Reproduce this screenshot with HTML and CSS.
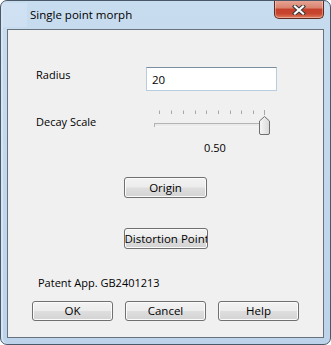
FILE: index.html
```html
<!DOCTYPE html>
<html lang="en">
<head>
    <meta charset="UTF-8">
    <title>Single point morph</title>
    <link rel="stylesheet" href="styles.css">
</head>
<body>
    <div class="window">
        <div class="titlebar">
            <span class="icon-slot"></span>
            <span class="title">Single point morph</span>
            <button class="close-btn" aria-label="Close">
                <svg width="14" height="10" viewBox="0 0 14 10">
                    <path d="M3 1.5 L11 8.5 M11 1.5 L3 8.5" stroke="#3a3a3a" stroke-width="4.2" stroke-linecap="square"/>
                    <path d="M3 1.5 L11 8.5 M11 1.5 L3 8.5" stroke="#ffffff" stroke-width="2.2" stroke-linecap="square"/>
                </svg>
            </button>
        </div>

        <div class="client">
            <div class="row row-radius">
                <label for="radius">Radius</label>
                <input type="text" id="radius" value="20">
            </div>

            <div class="row row-decay">
                <label>Decay Scale</label>
                <!-- trackbar -->
                <svg class="slider" width="124" height="30" viewBox="0 0 124 30">
                    <defs>
                        <linearGradient id="thumbFill" x1="0" y1="0" x2="1" y2="0">
                            <stop offset="0" stop-color="#f7f7f7"/>
                            <stop offset="1" stop-color="#d9d9d9"/>
                        </linearGradient>
                    </defs>
                    <g stroke="#a8a8a8" stroke-width="1">
                        <line x1="9.5" y1="3.5" x2="9.5" y2="7"/>
                        <line x1="21.5" y1="3.5" x2="21.5" y2="7"/>
                        <line x1="33.5" y1="3.5" x2="33.5" y2="7"/>
                        <line x1="45.5" y1="3.5" x2="45.5" y2="7"/>
                        <line x1="56.5" y1="3.5" x2="56.5" y2="7"/>
                        <line x1="68.5" y1="3.5" x2="68.5" y2="7"/>
                        <line x1="80.5" y1="3.5" x2="80.5" y2="7"/>
                        <line x1="91.5" y1="3.5" x2="91.5" y2="7"/>
                        <line x1="103.5" y1="3.5" x2="103.5" y2="7"/>
                        <line x1="114.5" y1="3" x2="114.5" y2="8"/>
                    </g>
                    <rect x="4.5" y="16.5" width="112" height="3" fill="#e9ebeb" stroke="#b4b4b4"/>
                    <line x1="5" y1="19.5" x2="116" y2="19.5" stroke="#f4f4f4"/>
                    <path d="M109.5 14 L114.5 9.5 L119.5 14 L119.5 26 Q119.5 27.5 118 27.5 L111 27.5 Q109.5 27.5 109.5 26 Z"
                          fill="url(#thumbFill)" stroke="#6f6f6f"/>
                </svg>
            </div>

            <div class="slider-value">0.50</div>

            <div class="center-row">
                <button class="btn btn-origin">Origin</button>
            </div>
            <div class="center-row row-distortion">
                <button class="btn btn-distortion">Distortion Point</button>
            </div>

            <p class="patent">Patent App. GB2401213</p>

            <div class="footer">
                <button class="btn btn-footer">OK</button>
                <button class="btn btn-footer">Cancel</button>
                <button class="btn btn-footer">Help</button>
            </div>
        </div>
    </div>
</body>
</html>
```

FILE: styles.css
```css
* {
    margin: 0;
    padding: 0;
    box-sizing: border-box;
}

body {
    font-family: "Open Sans", "Noto Sans", sans-serif;
    font-size: 11px;
    line-height: 16px;
    color: #000;
    background: #ffffff;
}

/* Okno dialogu */
.window {
    width: 331px;
    height: 345px;
    border: 1px solid #4a5868;
    border-radius: 7px;
    background: linear-gradient(#c8dcef, #bcd3ea);
    box-shadow: inset 2px 0 0 #d6e5f4;
    padding: 0 6px 6px 6px;
    display: flex;
    flex-direction: column;
    overflow: hidden;
}

/* Titulek */
.titlebar {
    height: 28px;
    display: flex;
    align-items: flex-start;
}

.icon-slot {
    width: 24px;
    height: 24px;
    margin-top: 2px;
    margin-left: -4px;
    background: #d2e3f3;
    opacity: 0.7;
}

.title {
    margin-left: 3px;
    margin-top: 6px;
    font-size: 11.5px;
}

.close-btn {
    margin-left: auto;
    margin-top: -1px;
    width: 50px;
    height: 19px;
    border: 1px solid #5e2a22;
    border-top: none;
    border-radius: 0 0 5px 5px;
    background: linear-gradient(#e9a898 0%, #d9826e 45%, #c5402a 50%, #c7452f 75%, #e07a5b 100%);
    box-shadow: inset 0 0 0 1px rgba(255, 255, 255, 0.35);
    display: flex;
    align-items: center;
    justify-content: center;
    padding-top: 1px;
}

/* Klientská oblast */
.client {
    flex: 1;
    background: #f0f0f0;
    border: 1px solid #66737f;
    padding: 37px 0 0 28px;
}

.row {
    display: flex;
    align-items: flex-start;
}

.row label {
    width: 110px;
}

.row-radius input {
    width: 131px;
    height: 24px;
    border: 1px solid #b9cde1;
    border-top-color: #7b8da1;
    background: #fff;
    padding: 0 0 0 5px;
    font-family: inherit;
    font-size: 11.5px;
    outline: none;
}

.row-decay {
    margin-top: 16px;
}

.row-decay label {
    margin-top: 7px;
}

.slider {
    display: block;
    margin-left: 4px;
}

.slider-value {
    margin-top: 3px;
    margin-left: 114px;
    width: 130px;
    text-align: center;
}

.center-row {
    display: flex;
    justify-content: center;
    margin-left: -28px;
    margin-top: 21px;
}

.row-distortion {
    margin-top: 30px;
}

/* Tlačítka */
.btn {
    font-family: inherit;
    font-size: 11.5px;
    color: #000;
    border: 1px solid #707070;
    border-radius: 3px;
    background: linear-gradient(#f3f3f3 0%, #ececec 48%, #dedede 52%, #d3d3d3 100%);
    box-shadow: inset 0 0 0 1px #fbfbfb;
    height: 21px;
    line-height: 17px;
    white-space: nowrap;
}

.btn-origin {
    width: 83px;
}

.btn-distortion {
    width: 84px;
    padding: 0;
    overflow: hidden;
}

.patent {
    margin-top: 26px;
    margin-left: 2px;
}

.footer {
    display: flex;
    gap: 12px;
    margin-top: 10px;
    margin-left: -4px;
}

.btn-footer {
    width: 81px;
    height: 20px;
    line-height: 16px;
}
```
